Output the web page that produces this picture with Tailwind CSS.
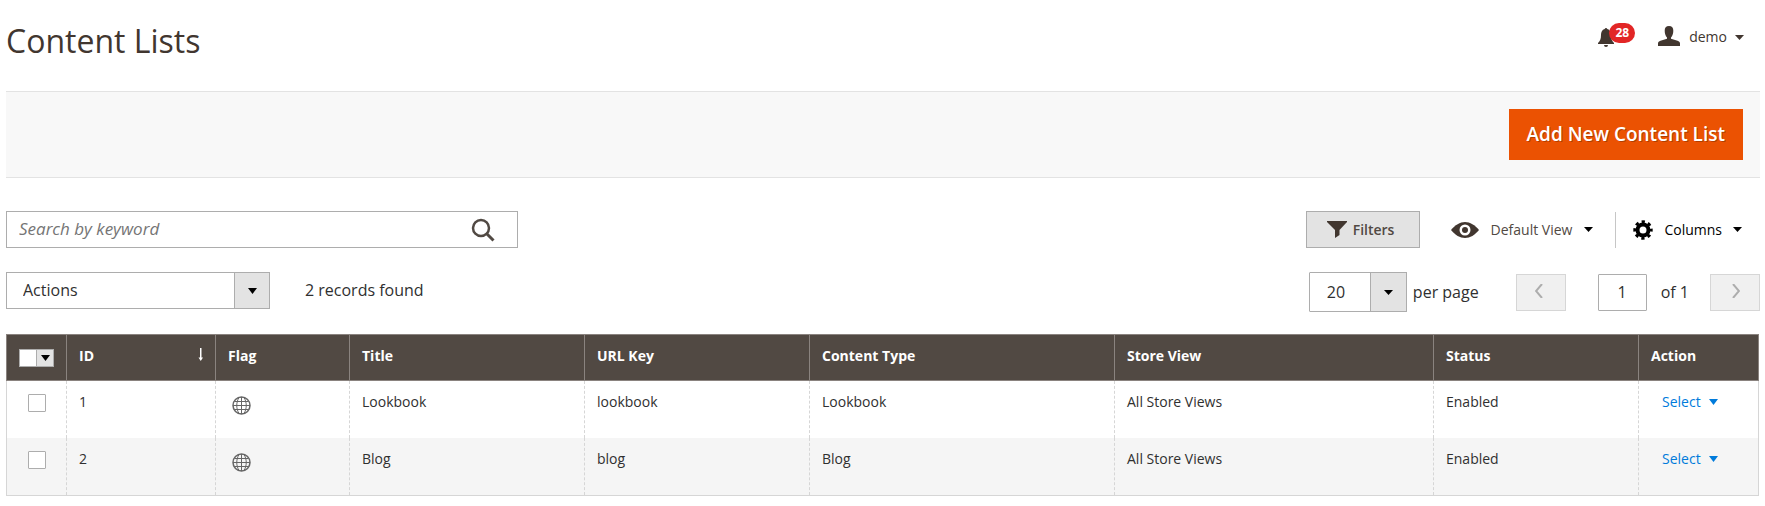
<!doctype html>
<html lang="en">
  <head>
    <meta charset="UTF-8" />
    <meta name="viewport" content="width=device-width, initial-scale=1.0" />
    <title>Content Lists</title>
    <script src="https://cdn.jsdelivr.net/npm/@tailwindcss/browser@4"></script>
  </head>
  <body class="bg-white pl-1.5 pr-[5px] font-['Open_Sans',sans-serif] text-sm text-[#303030]">
    <header class="flex h-[91px] items-start justify-between pr-4">
      <h1 class="pt-[19px] text-[32px] leading-[44px] text-[#41362f]">Content Lists</h1>

      <div class="flex items-center pt-[22px] text-[#41362f]">
        <a href="#" aria-label="Notifications" class="relative mr-[23px] flex h-[30px] w-[37px] items-center">
          <svg class="h-[19px] w-4" viewBox="0 0 16 19" fill="currentColor"><path d="M8 0a1.500 1.500 0 0 0-1.300 1C4 1.800 3 4 3 7c0 4-1 6-3 8v1h16v-1c-2-2-3-4-3-8 0-3-1-5.200-3.700-6A1.500 1.500 0 0 0 8 0zM6 17a2 2 0 0 0 4 0z" /></svg>
          <span class="absolute top-px right-0 rounded-full bg-[#e22626] px-1.5 text-xs leading-5 font-bold text-white">28</span>
        </a>
        <button type="button" class="flex items-center">
          <svg class="mb-0.5 h-5 w-[22px]" viewBox="0 0 22 21" preserveAspectRatio="none" fill="currentColor"><path d="M11 0c3 0 4.400 1.800 4.300 5 0 3-.8 5.500-2.300 7v1.500l6.500 2c1.500.5 2.500 1.500 2.500 3V21H0v-2.500c0-1.500 1-2.500 2.500-3l6.500-2V12C7.500 10.500 6.700 8 6.700 5 6.600 1.800 8 0 11 0z" /></svg>
          <span class="ml-[9px]">demo</span>
          <svg class="ml-2 h-[5px] w-[9px]" viewBox="0 0 9 5" fill="currentColor"><path d="M0 0h9L4.500 5z" /></svg>
        </button>
      </div>
    </header>

    <div class="flex justify-end border-y border-[#e3e3e3] bg-[#f8f8f8] py-[17px] pr-[17px]">
      <button type="button" class="h-[51px] bg-[#eb5202] px-[18px] text-[19px] font-semibold text-white text-shadow-[1px_1px_0_rgba(0,0,0,0.25)]">Add New Content List</button>
    </div>

    <main class="pt-[33px]">
      <div class="flex items-center justify-between">
        <form class="flex h-[37px] w-lg items-center border border-[#adadad] pr-[22px]">
          <input type="text" aria-label="Search by keyword" placeholder="Search by keyword" class="min-w-0 flex-1 px-3 text-[17px] italic outline-none placeholder:text-[#757575]" />
          <button type="submit" aria-label="Search">
            <svg class="h-6 w-6" viewBox="0 0 24 24" fill="none" stroke="#514943"><circle cx="10" cy="10" r="8" stroke-width="2.500" /><path d="M15.500 15.500l7 7" stroke-width="3" /></svg>
          </button>
        </form>

        <div class="flex items-center">
          <button type="button" class="flex h-[37px] w-[114px] items-center justify-center gap-1.5 border border-[#adadad] bg-[#e3e3e3] pr-1 font-semibold text-[#514943]">
            <svg class="h-[17px] w-5" viewBox="0 0 20 17" fill="#41362f"><path d="M0 0h20v1l-7.500 8v5L8 17V9L0 1z" /></svg>
            Filters
          </button>
          <button type="button" class="ml-[31px] flex items-center text-[#514943]">
            <svg class="h-4 w-7" viewBox="0 0 28 16"><path d="M0 8C4 3 9 0 14 0s10 3 14 8c-4 5-9 8-14 8S4 13 0 8z" fill="#41362f" /><circle cx="14" cy="8" r="5.500" fill="#fff" /><circle cx="14" cy="8" r="3" fill="#41362f" /></svg>
            <span class="ml-3">Default View</span>
            <svg class="ml-3 h-[5px] w-[9px] text-black" viewBox="0 0 9 5" fill="currentColor"><path d="M0 0h9L4.500 5z" /></svg>
          </button>
          <button type="button" class="ml-[22px] flex h-9 items-center border-l border-[#c6c6c6] pr-[18px] pl-[17px] text-black">
            <svg class="h-5 w-5" viewBox="0 0 20 20"><circle cx="10" cy="10" r="5.500" fill="none" stroke="#000" stroke-width="4" /><circle cx="10" cy="10" r="8.200" fill="none" stroke="#000" stroke-width="3" stroke-dasharray="3.220" stroke-dashoffset="1.610" /></svg>
            <span class="ml-[11px]">Columns</span>
            <svg class="ml-[11px] h-[5px] w-[9px]" viewBox="0 0 9 5" fill="currentColor"><path d="M0 0h9L4.500 5z" /></svg>
          </button>
        </div>
      </div>

      <div class="mt-6 flex items-start justify-between text-base">
        <div class="flex items-center">
          <div class="relative h-[37px] w-[264px]">
            <select aria-label="Actions" class="h-full w-full appearance-none border border-[#adadad] bg-white pb-0.5 pl-4">
              <option>Actions</option>
            </select>
            <span class="pointer-events-none absolute inset-y-0 right-0 flex w-9 items-center justify-center border border-[#adadad] bg-[#e3e3e3]">
              <svg class="h-[6px] w-[9px]" viewBox="0 0 9 6"><path d="M0 0h9L4.500 6z" /></svg>
            </span>
          </div>
          <p class="ml-[35px] pb-0.5">2 records found</p>
        </div>

        <div class="flex items-center">
          <div class="relative h-10 w-[98px]">
            <select id="pageSize" class="h-full w-full appearance-none rounded-[1px] border border-[#adadad] bg-white pl-[17px]">
              <option>20</option>
            </select>
            <span class="pointer-events-none absolute inset-y-0 right-0 flex w-[37px] items-center justify-center border border-[#adadad] bg-[#e3e3e3]">
              <svg class="h-[5px] w-[9px]" viewBox="0 0 9 5"><path d="M0 0h9L4.500 5z" /></svg>
            </span>
          </div>
          <label for="pageSize" class="ml-1.5">per page</label>
          <button type="button" disabled aria-label="Previous page" class="ml-[37px] flex h-[37px] w-[50px] items-center justify-center border border-[#d6d6d6] bg-[#f0f0f0]">
            <svg class="mr-1 mb-0.5 h-3.5 w-2" viewBox="0 0 8 14" fill="none" stroke="#adadad" stroke-width="2"><path d="M7 0L1 7l6 7" /></svg>
          </button>
          <input id="page" type="text" value="1" class="ml-8 h-[37px] w-[49px] rounded-[1px] border border-[#adadad] text-center" />
          <label for="page" class="ml-3.5">of 1</label>
          <button type="button" disabled aria-label="Next page" class="ml-[21px] flex h-[37px] w-[50px] items-center justify-center border border-[#d6d6d6] bg-[#f0f0f0]">
            <svg class="mb-0.5 ml-0.5 h-3.5 w-2" viewBox="0 0 8 14" fill="none" stroke="#adadad" stroke-width="2"><path d="M1 0l6 7-6 7" /></svg>
          </button>
        </div>
      </div>

      <table class="mt-[22px] w-[calc(100%-1px)] table-fixed border-collapse border border-[#d6d6d6] text-left">
        <colgroup>
          <col class="w-[60px]" />
          <col class="w-[149px]" />
          <col class="w-[134px]" />
          <col class="w-[235px]" />
          <col class="w-[225px]" />
          <col class="w-[305px]" />
          <col class="w-[319px]" />
          <col class="w-[205px]" />
          <col class="w-[120px]" />
        </colgroup>
        <thead class="bg-[#514943] text-white">
          <tr class="h-[46px] *:border *:border-[#8a837f] *:px-3 *:pb-1 *:font-bold">
            <th>
              <button type="button" aria-label="Select rows" class="mt-1 flex h-[18px] w-[35px] border border-[#adadad] bg-white">
                <span class="ml-auto flex h-full w-[17px] items-center justify-center border-l border-[#adadad] bg-[#e3e3e3]">
                  <svg class="h-[6px] w-[9px]" viewBox="0 0 9 6"><path d="M0 0h9L4.500 6z" /></svg>
                </span>
              </button>
            </th>
            <th>
              <span class="flex items-center justify-between">
                ID
                <svg class="mb-0.5 h-[13px] w-[5px]" viewBox="0 0 5 13" fill="#fff"><path d="M2 0h1.500v9.500H5L2.750 13 .5 9.500H2z" /></svg>
              </span>
            </th>
            <th>Flag</th>
            <th>Title</th>
            <th>URL Key</th>
            <th>Content Type</th>
            <th>Store View</th>
            <th>Status</th>
            <th>Action</th>
          </tr>
        </thead>
        <tbody>
          <tr class="h-[57px] *:border-x *:border-dashed *:border-[#d6d6d6] *:px-3 *:pt-[11px] *:align-top">
            <td><input type="checkbox" aria-label="Select row 1" class="mx-auto mt-[2px] block h-[18px] w-[18px] appearance-none rounded-[1px] border border-[#adadad] bg-white" /></td>
            <td>1</td>
            <td>
              <svg class="mt-1 ml-1 h-[19px] w-[19px]" viewBox="0 0 19 19" fill="none" stroke="#666"><circle cx="9.500" cy="9.500" r="8.500" stroke-width="1.500" /><path d="M9.500 1v17M1 9.500h17M3 5.500h13M3 13.500h13M7 1.500c-3 5-3 11 0 16M12 1.500c3 5 3 11 0 16" /></svg>
            </td>
            <td>Lookbook</td>
            <td>lookbook</td>
            <td>Lookbook</td>
            <td>All Store Views</td>
            <td>Enabled</td>
            <td>
              <button type="button" class="ml-[11px] flex items-center gap-2 text-[#007bdb]">
                Select
                <svg class="h-[6px] w-[9px]" viewBox="0 0 9 6" fill="currentColor"><path d="M0 0h9L4.500 6z" /></svg>
              </button>
            </td>
          </tr>
          <tr class="h-[58px] bg-[#f5f5f5] *:border-x *:border-dashed *:border-[#d6d6d6] *:px-3 *:pt-[11px] *:align-top">
            <td><input type="checkbox" aria-label="Select row 2" class="mx-auto mt-[2px] block h-[18px] w-[18px] appearance-none rounded-[1px] border border-[#adadad] bg-white" /></td>
            <td>2</td>
            <td>
              <svg class="mt-1 ml-1 h-[19px] w-[19px]" viewBox="0 0 19 19" fill="none" stroke="#666"><circle cx="9.500" cy="9.500" r="8.500" stroke-width="1.500" /><path d="M9.500 1v17M1 9.500h17M3 5.500h13M3 13.500h13M7 1.500c-3 5-3 11 0 16M12 1.500c3 5 3 11 0 16" /></svg>
            </td>
            <td>Blog</td>
            <td>blog</td>
            <td>Blog</td>
            <td>All Store Views</td>
            <td>Enabled</td>
            <td>
              <button type="button" class="ml-[11px] flex items-center gap-2 text-[#007bdb]">
                Select
                <svg class="h-[6px] w-[9px]" viewBox="0 0 9 6" fill="currentColor"><path d="M0 0h9L4.500 6z" /></svg>
              </button>
            </td>
          </tr>
        </tbody>
      </table>
    </main>
  </body>
</html>
